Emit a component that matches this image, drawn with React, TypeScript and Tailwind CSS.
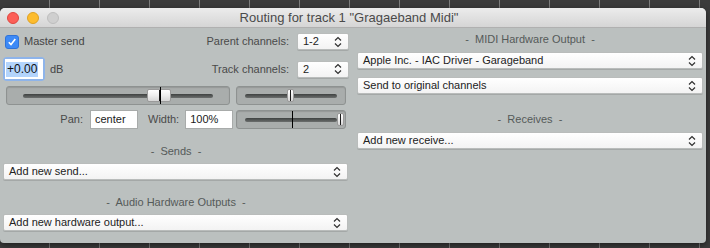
import React from "react";

const font = { fontFamily: '"Liberation Sans", Arial, sans-serif' };

const Chevrons = () => (
  <svg width="8" height="12" viewBox="0 0 8 12" className="shrink-0">
    <path d="M1 4.5 L4 1.5 L7 4.5" fill="none" stroke="#2f2f2f" strokeWidth="1.2" />
    <path d="M1 7.5 L4 10.5 L7 7.5" fill="none" stroke="#2f2f2f" strokeWidth="1.2" />
  </svg>
);

const Select = ({ label, className = "" }: { label: string; className?: string }) => (
  <div
    className={`h-[17px] flex items-center justify-between pl-[5px] pr-[6px] rounded-[2px] bg-gradient-to-b from-white to-[#f3f3f3] border border-[#b9bcbb] shadow-[0_1px_0_rgba(0,0,0,0.12)] text-[11px] text-[#222] ${className}`}
  >
    <span className="leading-none">{label}</span>
    <Chevrons />
  </div>
);

const Heading = ({ text, className = "" }: { text: string; className?: string }) => (
  <div className={`h-[13px] text-center text-[11px] leading-[13px] text-[#555a59] whitespace-pre ${className}`}>
    {`-  ${text}  -`}
  </div>
);

const Slider = ({
  className = "",
  inset,
  thumbLeft,
  thumbWidth,
  lineLeft,
}: {
  className?: string;
  inset: string;
  thumbLeft: number;
  thumbWidth: number;
  lineLeft?: number;
}) => (
  <div
    className={`relative h-[19px] rounded-[3px] bg-[#a9adac] border border-[#8e9291] shadow-[inset_0_1px_1px_rgba(0,0,0,0.12)] flex items-center ${inset} ${className}`}
  >
    <div className="h-[4px] w-full rounded-[2px] bg-gradient-to-b from-[#3f4241] to-[#6c6f6e]" />
    {lineLeft !== undefined && thumbWidth <= 10 && (
      <div className="absolute top-0 bottom-0 w-px bg-black" style={{ left: lineLeft }} />
    )}
    <div
      className="absolute top-[2px] bottom-[2px] rounded-[2px] bg-gradient-to-b from-white via-[#eeeeee] to-[#d6d6d6] border border-[#9a9a9a] flex justify-center"
      style={{ left: thumbLeft, width: thumbWidth }}
    >
      <div className="w-px h-full bg-[#1a1a1a]" />
    </div>
    {lineLeft !== undefined && thumbWidth > 10 && (
      <div className="absolute top-0 bottom-0 w-px bg-black" style={{ left: lineLeft }} />
    )}
  </div>
);

const TextBox = ({ value, className = "" }: { value: string; className?: string }) => (
  <div
    className={`h-[19px] bg-white border border-[#a8abaa] flex items-center pl-[4px] text-[11px] text-[#1a1a1a] ${className}`}
  >
    {value}
  </div>
);

export default function App() {
  return (
    <div
      className="w-[710px] h-[248px] overflow-hidden bg-[#3c3c3c] bg-[repeating-linear-gradient(90deg,transparent_0_49px,#7d7d7d_49px_50px)]"
      style={font}
    >
      <div className="mt-[8px] w-[706px] h-[235px] rounded-t-[5px] rounded-b-[4px] bg-[#bbc0bf] shadow-[0_2px_6px_rgba(0,0,0,0.5)] overflow-hidden flex flex-col">
        {/* Title bar */}
        <div className="relative h-[20px] shrink-0 bg-gradient-to-b from-[#ececec] to-[#d5d5d5] border-b border-[#b0b0b0] flex items-center justify-center">
          <div className="absolute left-[7px] top-[4px] flex gap-[8px]">
            <div className="w-[12px] h-[12px] rounded-full bg-[#fc5f57] border border-[#de4640]" />
            <div className="w-[12px] h-[12px] rounded-full bg-[#fdbc2e] border border-[#dea123]" />
            <div className="w-[12px] h-[12px] rounded-full bg-[#cfcfcf] border border-[#bdbdbd]" />
          </div>
          <span className="text-[13px] text-[#4a4a4a] leading-none pr-[8px]">
            Routing for track 1 "Gragaeband Midi"
          </span>
        </div>

        <div className="flex">
          {/* Left column */}
          <div className="w-[349px] pl-[3px] flex flex-col">
            <div className="mt-[5px] h-[17px] flex items-center text-[11px] text-[#444]">
              <div className="ml-[2px] w-[14px] h-[14px] rounded-[3px] bg-[#3d8af7] border border-[#2f73d8] flex items-center justify-center">
                <svg width="10" height="10" viewBox="0 0 10 10">
                  <path d="M1.8 5.2 L4 7.6 L8.3 2" fill="none" stroke="white" strokeWidth="1.6" />
                </svg>
              </div>
              <span className="ml-[5px]">Master send</span>
              <span className="ml-auto mr-[8px] text-[#4a4a4a]">Parent channels:</span>
              <Select label="1-2" className="w-[52px]" />
            </div>

            <div className="mt-[7px] h-[24px] flex items-center text-[11px] text-[#444]">
              <div className="w-[42px] h-[24px] rounded-[4px] bg-[#8eb4ea] p-[2px]">
                <div className="h-full bg-white flex items-center pl-[1px]">
                  <span className="bg-[#b3d4fc] text-[#111] text-[12px] leading-[15px] px-px">+0.00</span>
                </div>
              </div>
              <span className="ml-[5px]">dB</span>
              <span className="ml-auto mr-[8px] text-[#4a4a4a]">Track channels:</span>
              <Select label="2" className="w-[52px]" />
            </div>

            <div className="mt-[5px] flex gap-[6px]">
              <Slider className="ml-[3px] w-[224px]" inset="px-[16px]" thumbLeft={140} thumbWidth={24} lineLeft={153} />
              <Slider className="w-[110px]" inset="px-[8px]" thumbLeft={50} thumbWidth={7} />
            </div>

            <div className="mt-[5px] flex items-center text-[11px] text-[#4a4a4a]">
              <span className="w-[80px] text-right">Pan:</span>
              <TextBox value="center" className="ml-[7px] w-[48px]" />
              <span className="ml-[10px]">Width:</span>
              <TextBox value="100%" className="ml-[6px] w-[48px]" />
              <Slider className="ml-[3px] w-[110px]" inset="px-[8px]" thumbLeft={100} thumbWidth={7} lineLeft={55} />
            </div>

            <Heading text="Sends" className="mt-[16px]" />
            <Select label="Add new send..." className="mt-[5px] w-[345px]" />

            <Heading text="Audio Hardware Outputs" className="mt-[16px]" />
            <Select label="Add new hardware output..." className="mt-[5px] w-[345px]" />
          </div>

          {/* Right column */}
          <div className="ml-[8px] w-[346px] flex flex-col">
            <Heading text="MIDI Hardware Output" className="mt-[5px]" />
            <Select label="Apple Inc. - IAC Driver - Garageband" className="mt-[6px]" />
            <Select label="Send to original channels" className="mt-[8px]" />
            <Heading text="Receives" className="mt-[19px]" />
            <Select label="Add new receive..." className="mt-[6px]" />
          </div>
        </div>
      </div>
    </div>
  );
}
